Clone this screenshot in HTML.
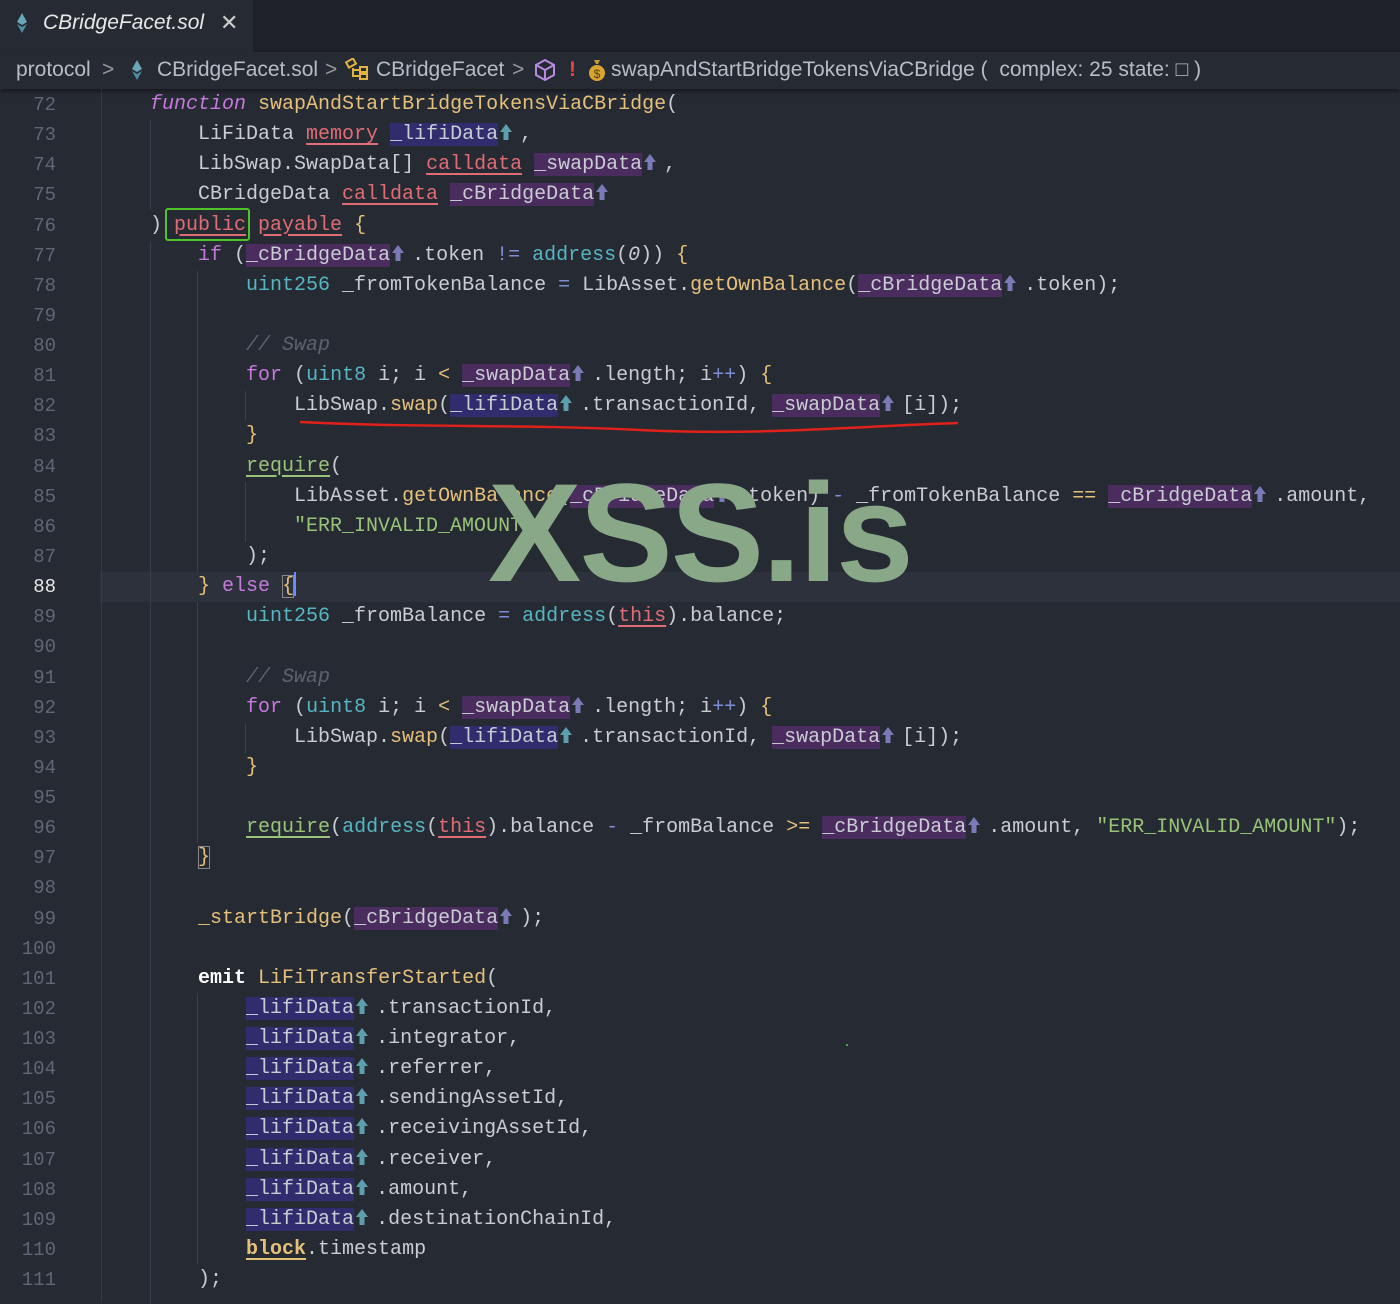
<!DOCTYPE html>
<html><head><meta charset="utf-8"><style>
*{margin:0;padding:0;box-sizing:border-box}
body{width:1400px;height:1302px;background:#262a33;overflow:hidden;position:relative;font-family:"Liberation Mono",monospace;color:#c9ccd3}
.tabs{position:absolute;left:0;top:0;width:1400px;height:52px;background:#1e2128}
.tab{position:absolute;left:0;top:0;width:253px;height:52px;background:#262a33;font-family:"Liberation Sans",sans-serif;font-style:italic;font-size:21px;color:#e8e8e8;line-height:46px;padding-left:43px}
.crumb{position:absolute;left:0;top:52px;width:1400px;height:37px;background:#262a33;box-shadow:0 3px 4px rgba(0,0,0,.35);font-family:"Liberation Sans",sans-serif;font-size:21px;color:#b8bcc4;z-index:3}
.crumb span{position:absolute;top:0;line-height:36px;white-space:pre}
.ln{position:absolute;left:0;width:56px;text-align:right;font-size:19px;color:#5f6675;height:30.13px;line-height:30.13px;margin-top:2px}
.l{position:absolute;left:102px;height:30.13px;line-height:30.13px;font-size:20px;white-space:pre;margin-top:2px}
.cur{position:absolute;left:100px;width:1300px;height:30px;background:#2c313b}
.g{position:absolute;width:1px;background:#3a3f4a}
.kw{color:#c678dd}.ki{color:#c678dd;font-style:italic}.fn{color:#e5c07b}
.rd{color:#e06c75;text-decoration:underline;text-underline-offset:4px}
.ty{color:#56b6c2}.gr{color:#98c379}.req{color:#98c379;text-decoration:underline;text-underline-offset:4px}
.cm{color:#5c6370;font-style:italic}.op{color:#e5c07b}.ob{color:#7f8fd6}
.hb{background:#2f2d6e}.hp{background:#4a2c5e}
.a1,.a2{display:inline-block;width:22px;height:18px;vertical-align:-2px;position:relative}
.a1 svg,.a2 svg{position:absolute;left:1px;top:0}
.yl{color:#e5c07b}
</style></head><body>
<div class="tabs"><div class="tab">CBridgeFacet.sol</div>
<span style="position:absolute;left:220px;top:10px;font-family:'Liberation Sans',sans-serif;font-size:22px;color:#ccc">✕</span>
<svg style="position:absolute;left:16px;top:13px" width="12" height="20" viewBox="0 0 12 20"><path d="M6 0L11 9L6 12L1 9Z" fill="#6aa6b8"/><path d="M1 11L6 14L11 11L6 20Z" fill="#4d8ea2"/></svg></div>
<div class="crumb">
<span style="left:16px">protocol</span><span style="left:102px;color:#999">&gt;</span>
<svg style="position:absolute;left:131px;top:8px" width="12" height="20" viewBox="0 0 12 20"><path d="M6 0L11 9L6 12L1 9Z" fill="#6aa6b8"/><path d="M1 11L6 14L11 11L6 20Z" fill="#4d8ea2"/></svg>
<span style="left:157px">CBridgeFacet.sol</span><span style="left:325px;color:#999">&gt;</span>
<svg style="position:absolute;left:345px;top:6px" width="26" height="24" viewBox="0 0 26 24" fill="none" stroke="#e2b340" stroke-width="2"><rect x="2" y="2" width="8" height="6" transform="rotate(-30 6 5)"/><path d="M8 10V18H14M8 12H14"/><rect x="15" y="9" width="7" height="5"/><rect x="15" y="16" width="7" height="5"/></svg>
<span style="left:376px">CBridgeFacet</span><span style="left:512px;color:#999">&gt;</span>
<svg style="position:absolute;left:534px;top:6px" width="22" height="24" viewBox="0 0 22 24" fill="none" stroke="#b68ae0" stroke-width="2"><path d="M11 2L20 7V17L11 22L2 17V7Z M2 7L11 12L20 7 M11 12V22"/></svg>
<span style="left:569px;color:#f04040;font-weight:bold">!</span>
<svg style="position:absolute;left:588px;top:6px" width="18" height="24" viewBox="0 0 18 24"><path d="M6 2H12L10 6H8Z" fill="#c99a2e"/><ellipse cx="9" cy="15" rx="8" ry="8" fill="#d9a530"/><text x="9" y="20" font-size="12" text-anchor="middle" fill="#5a3f10" font-family="Liberation Sans">$</text></svg>
<span style="left:611px">swapAndStartBridgeTokensViaCBridge (  complex: 25 state: □ )</span>
</div>

<div class="cur" style="top:572px"></div>
<div class="g" style="left:101px;top:88px;height:1214px;background:#353a45"></div>
<div class="g" style="left:150px;top:120px;height:90px"></div>
<div class="g" style="left:150px;top:241px;height:1063px"></div>
<div class="g" style="left:197px;top:271px;height:301px"></div>
<div class="g" style="left:197px;top:602px;height:241px"></div>
<div class="g" style="left:197px;top:993px;height:271px"></div>
<div class="g" style="left:245px;top:391px;height:30px"></div>
<div class="g" style="left:245px;top:482px;height:60px"></div>
<div class="g" style="left:245px;top:723px;height:30px"></div>

<div class="ln" style="top:88px">72</div><div class="ln" style="top:118.1px">73</div><div class="ln" style="top:148.3px">74</div><div class="ln" style="top:178.4px">75</div><div class="ln" style="top:208.5px">76</div><div class="ln" style="top:238.7px">77</div><div class="ln" style="top:268.8px">78</div><div class="ln" style="top:298.9px">79</div><div class="ln" style="top:329px">80</div><div class="ln" style="top:359.2px">81</div><div class="ln" style="top:389.3px">82</div><div class="ln" style="top:419.4px">83</div><div class="ln" style="top:449.6px">84</div><div class="ln" style="top:479.7px">85</div><div class="ln" style="top:509.8px">86</div><div class="ln" style="top:540px">87</div><div class="ln" style="top:570.1px;color:#e8e8e8">88</div><div class="ln" style="top:600.2px">89</div><div class="ln" style="top:630.3px">90</div><div class="ln" style="top:660.5px">91</div><div class="ln" style="top:690.6px">92</div><div class="ln" style="top:720.7px">93</div><div class="ln" style="top:750.9px">94</div><div class="ln" style="top:781px">95</div><div class="ln" style="top:811.1px">96</div><div class="ln" style="top:841.3px">97</div><div class="ln" style="top:871.4px">98</div><div class="ln" style="top:901.5px">99</div><div class="ln" style="top:931.6px">100</div><div class="ln" style="top:961.8px">101</div><div class="ln" style="top:991.9px">102</div><div class="ln" style="top:1022px">103</div><div class="ln" style="top:1052.2px">104</div><div class="ln" style="top:1082.3px">105</div><div class="ln" style="top:1112.4px">106</div><div class="ln" style="top:1142.6px">107</div><div class="ln" style="top:1172.7px">108</div><div class="ln" style="top:1202.8px">109</div><div class="ln" style="top:1232.9px">110</div><div class="ln" style="top:1263.1px">111</div>

<div class="l" style="top:88px">    <span class="ki">function</span> <span class="fn">swapAndStartBridgeTokensViaCBridge</span>(</div>
<div class="l" style="top:118.1px">        LiFiData <span class="rd">memory</span> <span class="hb">_lifiData</span><span class="a1"><svg width="14" height="18"><path d="M7 1L13 9H9.5V17H4.5V9H1Z" fill="#5d9fae"/></svg></span>,</div>
<div class="l" style="top:148.3px">        LibSwap.SwapData[] <span class="rd">calldata</span> <span class="hp">_swapData</span><span class="a2"><svg width="14" height="18"><path d="M7 1L13 9H9.5V17H4.5V9H1Z" fill="#7a7ab8"/></svg></span>,</div>
<div class="l" style="top:178.4px">        CBridgeData <span class="rd">calldata</span> <span class="hp">_cBridgeData</span><span class="a2"><svg width="14" height="18"><path d="M7 1L13 9H9.5V17H4.5V9H1Z" fill="#7a7ab8"/></svg></span></div>
<div class="l" style="top:208.5px">    ) <span class="rd">public</span> <span class="rd">payable</span> <span class="yl">{</span></div>
<div class="l" style="top:238.7px">        <span class="kw">if</span> (<span class="hp">_cBridgeData</span><span class="a2"><svg width="14" height="18"><path d="M7 1L13 9H9.5V17H4.5V9H1Z" fill="#7a7ab8"/></svg></span>.token <span class="ob">!=</span> <span class="ty">address</span>(<i>0</i>)) <span class="yl">{</span></div>
<div class="l" style="top:268.8px">            <span class="ty">uint256</span> _fromTokenBalance <span class="ob">=</span> LibAsset.<span class="fn">getOwnBalance</span>(<span class="hp">_cBridgeData</span><span class="a2"><svg width="14" height="18"><path d="M7 1L13 9H9.5V17H4.5V9H1Z" fill="#7a7ab8"/></svg></span>.token);</div>
<div class="l" style="top:329px">            <span class="cm">// Swap</span></div>
<div class="l" style="top:359.2px">            <span class="kw">for</span> (<span class="ty">uint8</span> i; i <span class="op">&lt;</span> <span class="hp">_swapData</span><span class="a2"><svg width="14" height="18"><path d="M7 1L13 9H9.5V17H4.5V9H1Z" fill="#7a7ab8"/></svg></span>.length; i<span class="ob">++</span>) <span class="yl">{</span></div>
<div class="l" style="top:389.3px">                LibSwap.<span class="fn">swap</span>(<span class="hb">_lifiData</span><span class="a1"><svg width="14" height="18"><path d="M7 1L13 9H9.5V17H4.5V9H1Z" fill="#5d9fae"/></svg></span>.transactionId, <span class="hp">_swapData</span><span class="a2"><svg width="14" height="18"><path d="M7 1L13 9H9.5V17H4.5V9H1Z" fill="#7a7ab8"/></svg></span>[i]);</div>
<div class="l" style="top:419.4px">            <span class="yl">}</span></div>
<div class="l" style="top:449.6px">            <span class="req">require</span>(</div>
<div class="l" style="top:479.7px">                LibAsset.<span class="fn">getOwnBalance</span>(<span class="hp">_cBridgeData</span><span class="a2"><svg width="14" height="18"><path d="M7 1L13 9H9.5V17H4.5V9H1Z" fill="#7a7ab8"/></svg></span>.token) <span class="ob">-</span> _fromTokenBalance <span class="op">==</span> <span class="hp">_cBridgeData</span><span class="a2"><svg width="14" height="18"><path d="M7 1L13 9H9.5V17H4.5V9H1Z" fill="#7a7ab8"/></svg></span>.amount,</div>
<div class="l" style="top:509.8px">                <span class="gr">"ERR_INVALID_AMOUNT"</span></div>
<div class="l" style="top:540px">            );</div>
<div class="l" style="top:570.1px">        <span class="yl">}</span> <span class="kw">else</span> <span class="yl" style="outline:1px solid #888;outline-offset:-1px">{</span><span style="display:inline-block;width:2px;height:24px;background:#6a8cff;vertical-align:-5px"></span></div>
<div class="l" style="top:600.2px">            <span class="ty">uint256</span> _fromBalance <span class="ob">=</span> <span class="ty">address</span>(<span class="rd">this</span>).balance;</div>
<div class="l" style="top:660.5px">            <span class="cm">// Swap</span></div>
<div class="l" style="top:690.6px">            <span class="kw">for</span> (<span class="ty">uint8</span> i; i <span class="op">&lt;</span> <span class="hp">_swapData</span><span class="a2"><svg width="14" height="18"><path d="M7 1L13 9H9.5V17H4.5V9H1Z" fill="#7a7ab8"/></svg></span>.length; i<span class="ob">++</span>) <span class="yl">{</span></div>
<div class="l" style="top:720.7px">                LibSwap.<span class="fn">swap</span>(<span class="hb">_lifiData</span><span class="a1"><svg width="14" height="18"><path d="M7 1L13 9H9.5V17H4.5V9H1Z" fill="#5d9fae"/></svg></span>.transactionId, <span class="hp">_swapData</span><span class="a2"><svg width="14" height="18"><path d="M7 1L13 9H9.5V17H4.5V9H1Z" fill="#7a7ab8"/></svg></span>[i]);</div>
<div class="l" style="top:750.9px">            <span class="yl">}</span></div>
<div class="l" style="top:811.1px">            <span class="req">require</span>(<span class="ty">address</span>(<span class="rd">this</span>).balance <span class="ob">-</span> _fromBalance <span class="op">&gt;=</span> <span class="hp">_cBridgeData</span><span class="a2"><svg width="14" height="18"><path d="M7 1L13 9H9.5V17H4.5V9H1Z" fill="#7a7ab8"/></svg></span>.amount, <span class="gr">"ERR_INVALID_AMOUNT"</span>);</div>
<div class="l" style="top:841.3px">        <span class="yl" style="outline:1px solid #888;outline-offset:-1px">}</span></div>
<div class="l" style="top:901.5px">        <span class="fn">_startBridge</span>(<span class="hp">_cBridgeData</span><span class="a2"><svg width="14" height="18"><path d="M7 1L13 9H9.5V17H4.5V9H1Z" fill="#7a7ab8"/></svg></span>);</div>
<div class="l" style="top:961.8px">        <b style="color:#fff">emit</b> <span class="fn">LiFiTransferStarted</span>(</div>
<div class="l" style="top:991.9px">            <span class="hb">_lifiData</span><span class="a1"><svg width="14" height="18"><path d="M7 1L13 9H9.5V17H4.5V9H1Z" fill="#5d9fae"/></svg></span>.transactionId,</div>
<div class="l" style="top:1022px">            <span class="hb">_lifiData</span><span class="a1"><svg width="14" height="18"><path d="M7 1L13 9H9.5V17H4.5V9H1Z" fill="#5d9fae"/></svg></span>.integrator,</div>
<div class="l" style="top:1052.2px">            <span class="hb">_lifiData</span><span class="a1"><svg width="14" height="18"><path d="M7 1L13 9H9.5V17H4.5V9H1Z" fill="#5d9fae"/></svg></span>.referrer,</div>
<div class="l" style="top:1082.3px">            <span class="hb">_lifiData</span><span class="a1"><svg width="14" height="18"><path d="M7 1L13 9H9.5V17H4.5V9H1Z" fill="#5d9fae"/></svg></span>.sendingAssetId,</div>
<div class="l" style="top:1112.4px">            <span class="hb">_lifiData</span><span class="a1"><svg width="14" height="18"><path d="M7 1L13 9H9.5V17H4.5V9H1Z" fill="#5d9fae"/></svg></span>.receivingAssetId,</div>
<div class="l" style="top:1142.6px">            <span class="hb">_lifiData</span><span class="a1"><svg width="14" height="18"><path d="M7 1L13 9H9.5V17H4.5V9H1Z" fill="#5d9fae"/></svg></span>.receiver,</div>
<div class="l" style="top:1172.7px">            <span class="hb">_lifiData</span><span class="a1"><svg width="14" height="18"><path d="M7 1L13 9H9.5V17H4.5V9H1Z" fill="#5d9fae"/></svg></span>.amount,</div>
<div class="l" style="top:1202.8px">            <span class="hb">_lifiData</span><span class="a1"><svg width="14" height="18"><path d="M7 1L13 9H9.5V17H4.5V9H1Z" fill="#5d9fae"/></svg></span>.destinationChainId,</div>
<div class="l" style="top:1232.9px">            <b class="fn" style="text-decoration:underline;text-underline-offset:4px">block</b>.timestamp</div>
<div class="l" style="top:1263.1px">        );</div>

<div style="position:absolute;left:165px;top:208px;width:85px;height:33px;border:2px solid #4fc42a;border-radius:3px"></div>
<svg style="position:absolute;left:0;top:0" width="1400" height="1302"><path d="M300 422 C420 428 520 424 640 430 S860 426 958 423" stroke="#e0201a" stroke-width="2.5" fill="none"/></svg>
<div style="position:absolute;left:488px;top:458px;font-family:'Liberation Sans',sans-serif;font-weight:bold;font-size:140px;line-height:150px;color:#88a888;letter-spacing:-2px">XSS.is</div>
<div style="position:absolute;left:846px;top:1044px;width:2px;height:2px;background:#4a4"></div>
</body></html>
